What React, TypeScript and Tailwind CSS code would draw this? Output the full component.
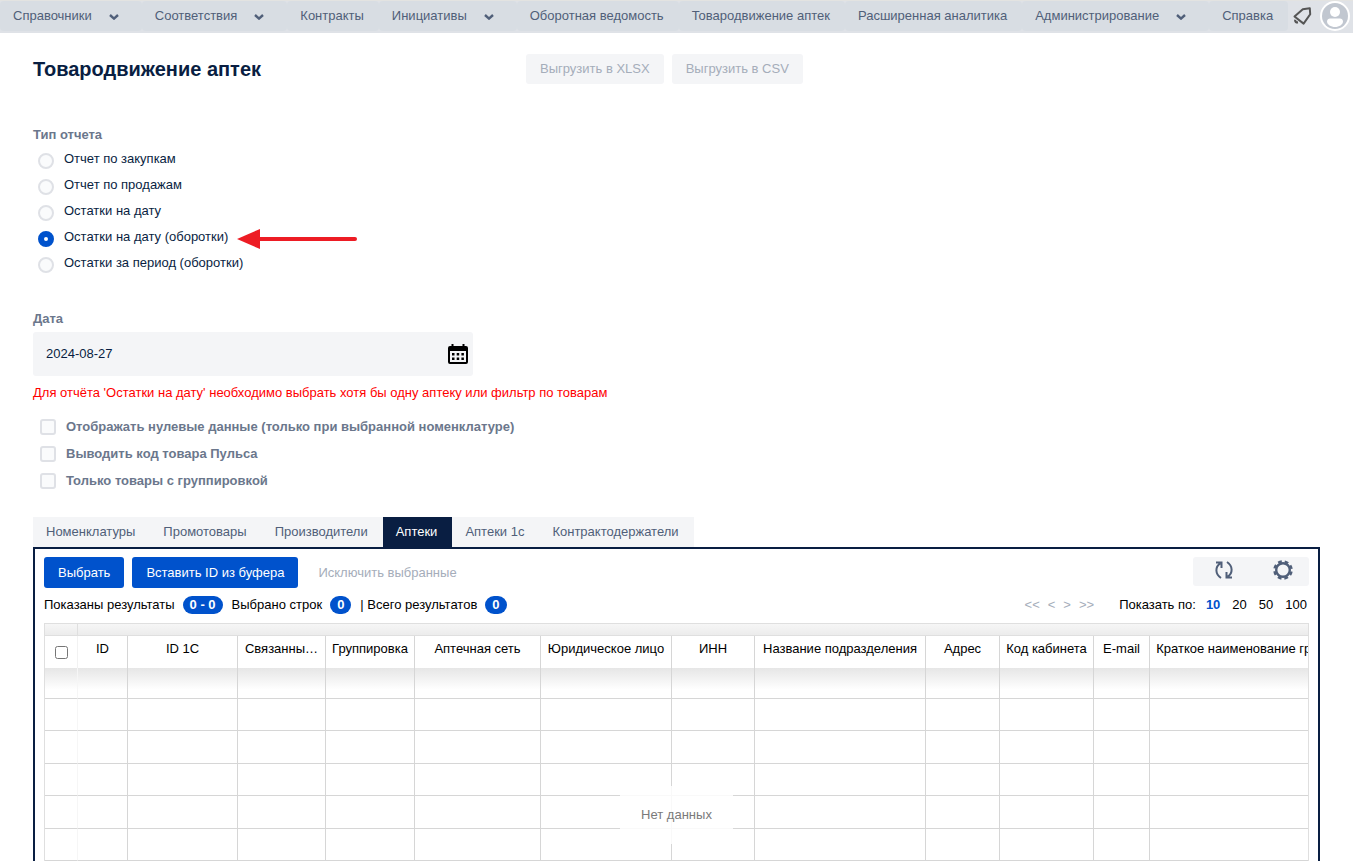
import { useState, type ReactNode } from "react";
import clsx from "clsx";

const menu = [
  { title: "Справочники", nested: true },
  { title: "Соответствия", nested: true },
  { title: "Контракты" },
  { title: "Инициативы", nested: true },
  { title: "Оборотная ведомость" },
  { title: "Товародвижение аптек" },
  { title: "Расширенная аналитика" },
  { title: "Администрирование", nested: true },
  { title: "Справка" },
];

const reportTypes = [
  "Отчет по закупкам",
  "Отчет по продажам",
  "Остатки на дату",
  "Остатки на дату (оборотки)",
  "Остатки за период (оборотки)",
];

const options = [
  "Отображать нулевые данные (только при выбранной номенклатуре)",
  "Выводить код товара Пульса",
  "Только товары с группировкой",
];

const tabs = [
  "Номенклатуры",
  "Промотовары",
  "Производители",
  "Аптеки",
  "Аптеки 1с",
  "Контрактодержатели",
];

const columns = [
  { title: "ID", width: "w-[49px]" },
  { title: "ID 1С", width: "w-[109px]" },
  { title: "Связанны…", width: "w-[87px]" },
  { title: "Группировка", width: "w-[88px]" },
  { title: "Аптечная сеть", width: "w-[125px]" },
  { title: "Юридическое лицо", width: "w-[130px]" },
  { title: "ИНН", width: "w-[82px]" },
  { title: "Название подразделения", width: "w-[170px]" },
  { title: "Адрес", width: "w-[73px]" },
  { title: "Код кабинета", width: "w-[93px]" },
  { title: "E-mail", width: "w-[55px]" },
  { title: "Краткое наименование грузополучателя", width: "w-[256px]" },
];

const rows = Array.from({ length: 10 }, (_, i) => i);

function ChevronIcon() {
  return (
    <svg className="mt-[2px] h-[6px] w-[10px]" viewBox="0 0 10 6" fill="none" aria-hidden="true">
      <path d="M1 1l4 3.600L9 1" stroke="currentColor" strokeWidth="2.400" />
    </svg>
  );
}

function BellIcon() {
  return (
    <svg className="size-[20px]" viewBox="0 0 20 20" fill="none" stroke="#555" aria-hidden="true">
      <path d="M2.500 10.500L10.800 3.200 17.800 2.200 18.200 8.200 11.600 17.600z" strokeWidth="2" strokeLinejoin="round" />
      <path d="M3.200 13.800c-.3 1.800.8 2.800 2.800 2.600" strokeWidth="2.200" />
    </svg>
  );
}

function AvatarIcon() {
  return (
    <svg className="size-[30px]" viewBox="0 0 30 30" aria-hidden="true">
      <circle cx="15" cy="15" r="15" fill="#fff" />
      <circle cx="15" cy="15" r="13" fill="#c1c7d0" />
      <circle cx="15" cy="11" r="5" fill="#fff" />
      <path d="M7 20.500c0-2 1.500-3 3-3h10c1.500 0 3 1 3 3 0 3-4 5.500-8 5.500s-8-2.500-8-5.500z" fill="#fff" />
    </svg>
  );
}

function CalendarIcon() {
  return (
    <svg className="size-[20px]" viewBox="0 0 20 20" aria-hidden="true">
      <path
        fillRule="evenodd"
        d="M3.500 0h2v2h9V0h2v2H18a2 2 0 0 1 2 2v14a2 2 0 0 1-2 2H2a2 2 0 0 1-2-2V4a2 2 0 0 1 2-2h1.500zM2 7v11h16V7z"
      />
      <path d="M4 9h2.500v2.500H4zM8.700 9h2.500v2.500H8.700zM13.400 9h2.500v2.500h-2.500zM4 13.500h2.500V16H4zM8.700 13.500h2.500V16H8.700zM13.400 13.500h2.500V16h-2.500z" />
    </svg>
  );
}

function RefreshIcon() {
  return (
    <svg className="size-[18px]" viewBox="0 0 18 18" fill="none" stroke="currentColor" strokeWidth="2" aria-hidden="true">
      <path d="M6 17C0 13 0 6 5.200 2.400M1 1.500h5.500V7" />
      <path d="M12 1c6 4 6 11 .8 14.600M17 16.500h-5.500V11" />
    </svg>
  );
}

function GearIcon() {
  return (
    <svg className="size-[20px]" viewBox="0 0 20 20" fill="none" aria-hidden="true">
      <circle cx="10" cy="10" r="6.800" stroke="currentColor" strokeWidth="2.400" />
      <circle
        cx="10"
        cy="10"
        r="8.600"
        stroke="currentColor"
        strokeWidth="2.400"
        strokeDasharray="3.800 2.954"
        strokeDashoffset="-1.477"
      />
    </svg>
  );
}

function Badge({ children }: { children: ReactNode }) {
  return (
    <span className="rounded-full bg-[#0052cc] px-[7px] leading-[18px] font-bold text-white">
      {children}
    </span>
  );
}

function TopMenu() {
  return (
    <header className="flex h-[33px] items-start border-t border-[#e3e3e1] bg-[#dfe2e7] pr-[3px] text-[#505f79]">
      <nav className="flex">
        {menu.map(({ title, nested }) => (
          <a
            key={title}
            href="#"
            className={clsx(
              "flex h-[30px] items-center gap-[17px] rounded bg-[#d8dde3] pl-[13px] whitespace-nowrap",
              nested ? "pr-[23px]" : "pr-[15px]"
            )}
          >
            {title}
            {nested && <ChevronIcon />}
          </a>
        ))}
      </nav>
      <div className="ml-auto flex items-center gap-2">
        <button type="button" aria-label="Уведомления">
          <BellIcon />
        </button>
        <button type="button" aria-label="Профиль">
          <AvatarIcon />
        </button>
      </div>
    </header>
  );
}

function PharmacyTable() {
  return (
    <div className="relative mt-[9px]">
      <div className="overflow-x-auto border border-[#dfdfdf] pb-[15px]">
        <table className="w-max min-w-full table-fixed border-separate border-spacing-0 text-black">
          <thead>
            <tr className="h-[12px] bg-linear-to-b from-[#f6f6f6] to-[#ebebeb]">
              <td className="w-[33px] border-r border-b border-[#dfdfdf]" />
              <td colSpan={columns.length} className="border-b border-[#dfdfdf]" />
            </tr>
            <tr className="h-[32px]">
              <th className="w-[33px] border-r border-[#f2f2f2]">
                <input type="checkbox" aria-label="Выбрать все" className="mx-auto block size-[13px]" />
              </th>
              {columns.map(({ title, width }) => (
                <th key={title} className="border-r border-[#d6d6d6] p-0 pb-[6px] font-normal">
                  <div className={clsx("truncate px-[5px]", width)}>{title}</div>
                </th>
              ))}
            </tr>
          </thead>
          <tbody>
            {rows.map((row) => (
              <tr
                key={row}
                className="h-[33px] even:h-[32px] first:h-[31px] first:bg-linear-to-b first:from-[#e6e6e6] first:to-white first:to-70%"
              >
                <td className="border-r border-b border-r-[#f6f6f6] border-b-[#d6d6d6]" />
                {columns.map(({ title }) => (
                  <td key={title} className="border-r border-b border-[#d6d6d6]" />
                ))}
              </tr>
            ))}
          </tbody>
        </table>
      </div>
      <div className="pointer-events-none absolute inset-0 flex items-center justify-center">
        <span className="bg-white/85 px-[21px] py-5 leading-[18px] text-[#7a7a7a]">Нет данных</span>
      </div>
    </div>
  );
}

function TabPanel() {
  return (
    <div className="border-2 border-[#091e42] p-[9px] pt-2">
      <div className="flex items-start">
        <div className="flex gap-2 font-medium">
          <button type="button" className="h-[31px] rounded-[3px] bg-[#0052cc] px-[14px] text-white">
            Выбрать
          </button>
          <button type="button" className="h-[31px] rounded-[3px] bg-[#0052cc] px-[14px] text-white">
            Вставить ID из буфера
          </button>
          <button type="button" disabled className="h-[31px] px-3 text-[#a5adba]">
            Исключить выбранные
          </button>
        </div>
        <div className="ml-auto flex h-[29px] w-[116px] items-center justify-between rounded-[3px] bg-[#f4f5f7] pr-4 pb-1 pl-[22px] text-[#505f79]">
          <button type="button" aria-label="Обновить">
            <RefreshIcon />
          </button>
          <button type="button" aria-label="Настройки">
            <GearIcon />
          </button>
        </div>
      </div>

      <div className="mt-2 flex h-[18px] items-center text-black">
        <span className="mr-2">Показаны результаты</span>
        <Badge>0 - 0</Badge>
        <span className="mr-2 ml-[9px]">Выбрано строк</span>
        <Badge>0</Badge>
        <span className="mr-2 ml-[9px]">| Всего результатов</span>
        <Badge>0</Badge>
        <div className="ml-auto flex gap-2 text-[#a5adba]">
          <button type="button" disabled>&lt;&lt;</button>
          <button type="button" disabled>&lt;</button>
          <button type="button" disabled>&gt;</button>
          <button type="button" disabled>&gt;&gt;</button>
        </div>
        <span className="ml-[25px]">Показать по:</span>
        <div className="ml-[10px] flex gap-3 pr-[2px]">
          <button type="button" className="font-bold text-[#0052cc]">10</button>
          <button type="button">20</button>
          <button type="button">50</button>
          <button type="button">100</button>
        </div>
      </div>

      <PharmacyTable />
    </div>
  );
}

export default function App() {
  const [reportType, setReportType] = useState(reportTypes[3]);
  const [activeTab, setActiveTab] = useState("Аптеки");
  const [date, setDate] = useState("2024-08-27");

  return (
    <div className="min-h-screen bg-white font-['Liberation_Sans',Arial,sans-serif] text-[13px] leading-[18px] text-[#091e42]">
      <TopMenu />

      <main className="px-[33px] pt-[21px] pb-8">
        <div className="flex items-center">
          <h1 className="w-[493px] text-xl leading-[28px] font-bold">Товародвижение аптек</h1>
          <div className="flex gap-2 text-[#a5adba]">
            <button type="button" disabled className="h-[30px] rounded-[3px] bg-[#f4f5f7] px-[14px]">
              Выгрузить в XLSX
            </button>
            <button type="button" disabled className="h-[30px] rounded-[3px] bg-[#f4f5f7] px-[14px]">
              Выгрузить в CSV
            </button>
          </div>
        </div>

        <fieldset className="mt-[42px]">
          <legend className="mb-[2px] font-bold text-[#6b778c]">Тип отчета</legend>
          {reportTypes.map((type) => (
            <div key={type} className="flex h-[26px] items-center">
              <label className="flex items-center gap-[10px] pl-[5px]">
                <input
                  type="radio"
                  name="reportType"
                  checked={type === reportType}
                  onChange={() => setReportType(type)}
                  className="mt-1 size-[16px] appearance-none rounded-full border-2 border-[#dfe1e6] bg-[#fafbfc] checked:border-[6px] checked:border-[#0052cc] checked:bg-white"
                />
                {type}
              </label>
              {type === "Остатки на дату (оборотки)" && (
                <svg className="mt-1 ml-[9px] h-[20px] w-[120px]" viewBox="0 0 120 20" aria-hidden="true">
                  <path d="M0 10L23 0v20z" fill="#ed1c24" />
                  <path d="M20 10h98" stroke="#ed1c24" strokeWidth="4" strokeLinecap="round" />
                </svg>
              )}
            </div>
          ))}
        </fieldset>

        <div className="mt-[34px] w-[440px]">
          <label htmlFor="date" className="block font-bold text-[#6b778c]">
            Дата
          </label>
          <div className="mt-1 flex h-[44px] items-center rounded-[3px] bg-[#f4f5f7] pr-[5px] pl-[13px]">
            <input
              id="date"
              type="text"
              value={date}
              onChange={(e) => setDate(e.target.value)}
              className="min-w-0 flex-1 bg-transparent outline-none"
            />
            <button type="button" aria-label="Открыть календарь" className="text-black">
              <CalendarIcon />
            </button>
          </div>
        </div>

        <p className="mt-2 text-[#ff0000]">
          Для отчёта 'Остатки на дату' необходимо выбрать хотя бы одну аптеку или фильтр по товарам
        </p>

        <div className="mt-[11px] pl-[7px]">
          {options.map((option) => (
            <label key={option} className="flex h-[27px] items-center gap-[10px] font-bold text-[#6b778c]">
              <input
                type="checkbox"
                className="size-[16px] appearance-none rounded-[3px] border-2 border-[#dfe1e6] bg-[#fafbfc] checked:bg-[#0052cc]"
              />
              {option}
            </label>
          ))}
        </div>

        <div className="mt-[23px] flex" role="tablist">
          {tabs.map((tab) => (
            <button
              key={tab}
              type="button"
              role="tab"
              aria-selected={tab === activeTab}
              onClick={() => setActiveTab(tab)}
              className={clsx(
                "h-[30px] pr-[15px] pl-[13px]",
                tab === activeTab ? "bg-[#091e42] font-medium text-white" : "bg-[#f4f5f7] text-[#505f79]"
              )}
            >
              {tab}
            </button>
          ))}
        </div>
        <TabPanel />
      </main>
    </div>
  );
}
